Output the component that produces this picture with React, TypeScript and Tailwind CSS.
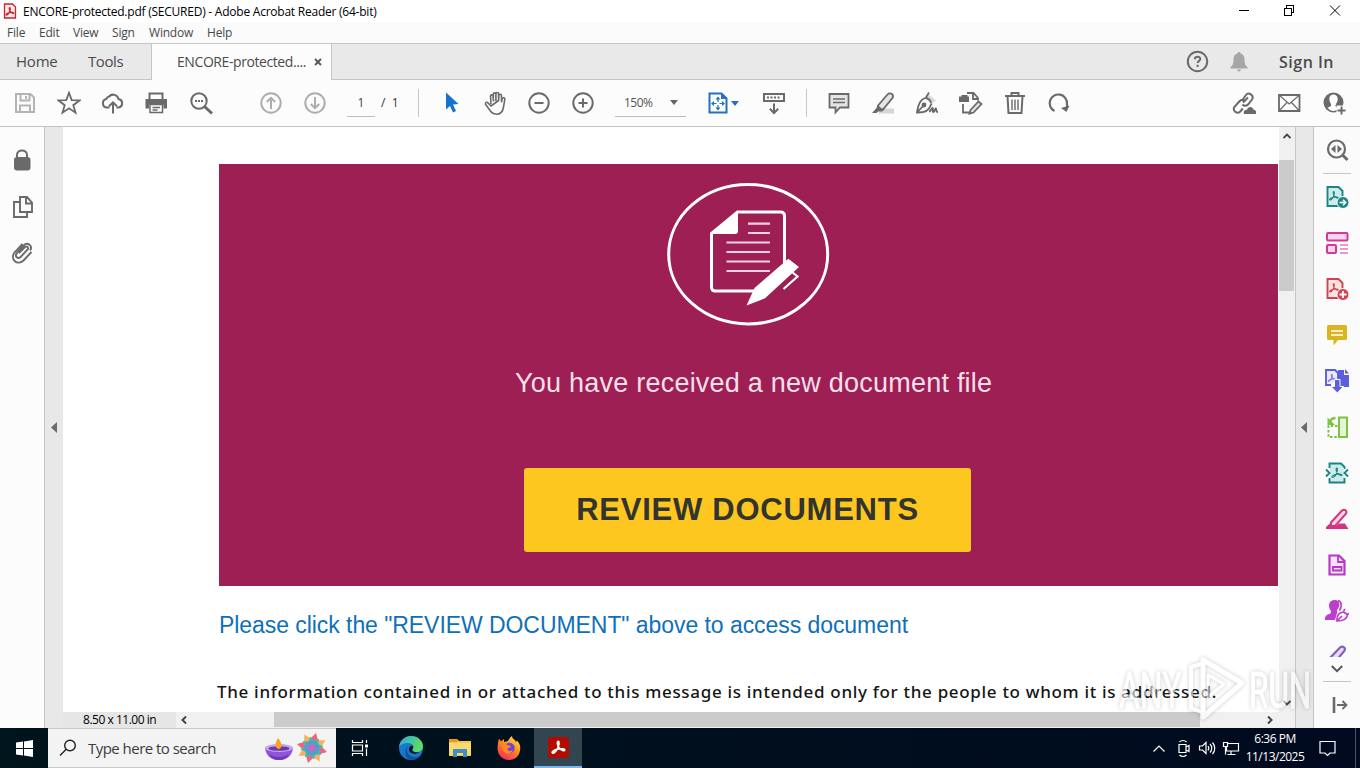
import type { ReactNode } from "react";

const G = "#6a6a6a";

type IconProps = {
  children: ReactNode;
  color?: string;
  size?: number;
  sw?: number;
};

const Icon = ({ children, color = G, size = 24, sw = 2 }: IconProps) => (
  <svg
    width={size}
    height={size}
    viewBox={`0 0 ${size} ${size}`}
    fill="none"
    stroke={color}
    strokeWidth={sw}
    className="shrink-0"
  >
    {children}
  </svg>
);

const Cell = ({ children }: { children: ReactNode }) => (
  <button className="w-11 h-full flex items-center justify-center shrink-0">{children}</button>
);

// the little three-lobed acrobat mark, drawn around 0,0
const Lobes = ({ x, y, s = 1, color, w = 1.2 }: { x: number; y: number; s?: number; color: string; w?: number }) => (
  <path
    transform={`translate(${x} ${y}) scale(${s})`}
    stroke={color}
    strokeWidth={w}
    fill="none"
    strokeLinejoin="round"
    d="M-5 4.6c-1.2-.8 1.6-2.6 4.4-3.2 2.4-.5 5.8-.6 5.8.7 0 1.5-3-.2-4.4-1.6C-.9-1.2-1.5-5-.3-5.2.9-5.2.5-1.6-.9 1.2-2.2 3.8-4.2 5.2-5 4.6z"
  />
);

const TitleBar = () => (
  <div className="h-[23px] bg-white flex items-center text-black">
    <svg width="14" height="16" viewBox="0 0 14 16" className="ml-[3px] -mt-[2px]">
      <path d="M1.5 1h8l3 3v11h-11z" fill="#fde8e8" stroke="#c9252d" strokeWidth="1.3" />
      <Lobes x={7} y={8.5} s={0.75} color="#c9252d" w={1.6} />
    </svg>
    <span className="ml-[6px] text-[12px] tracking-[-0.235px] whitespace-nowrap">
      ENCORE-protected.pdf (SECURED) - Adobe Acrobat Reader (64-bit)
    </span>
    <div className="ml-auto flex h-full">
      <svg width="136" height="23" viewBox="1224 0 136 23" fill="none" stroke="#000" shapeRendering="crispEdges">
        <path d="M1239 10.5h10M1284.5 8.5h7v7h-7zM1286.5 8v-2.5h7v7h-2.5" />
        <path d="M1330 5.5l10 10M1340 5.5l-10 10" shapeRendering="auto" />
      </svg>
    </div>
  </div>
);

const MenuBar = () => (
  <div className="h-5 bg-[#fbfbfb] flex items-center text-[12px] text-[#484848] tracking-[-0.2px]">
    <span className="ml-[7px] w-8">File</span>
    <span className="w-[34px]">Edit</span>
    <span className="w-[39px]">View</span>
    <span className="w-[37px]">Sign</span>
    <span className="w-[58px]">Window</span>
    <span>Help</span>
  </div>
);

const TabBar = () => (
  <div className="h-[37px] bg-[#e9e9e9] border-y border-[#c6c6c6] flex text-[#4b4b4b]">
    <div className="w-[151px] flex items-center text-[15px]">
      <span className="ml-4 w-[72px] tracking-[-0.2px]">Home</span>
      <span className="tracking-[-0.4px]">Tools</span>
    </div>
    <div className="w-[181px] h-9 bg-[#fcfcfc] border-x border-[#c6c6c6] flex items-center shrink-0">
      <span className="ml-[25px] w-[137px] -mt-[2px] text-[14px] tracking-[-0.42px]">ENCORE-protected....</span>
      <svg width="8" height="8" viewBox="0 0 8 8" stroke="#555" strokeWidth="1.8">
        <path d="M1 1l6 6M7 1l-6 6" />
      </svg>
    </div>
    <div className="ml-auto flex items-center">
      <Icon>
        <circle cx="11.5" cy="11.5" r="9.7" />
        <path d="M8.8 9.2c0-3.4 5.6-3.3 5.5-.2 0 1.8-2.6 2-2.7 4M11.6 14.8V17" />
      </Icon>
      <svg width="18" height="20" viewBox="0 0 18 20" fill="#a6a6a6" className="ml-5">
        <path d="M9 0c1 0 1.5.6 1.5 1.5 2.6.6 4 2.7 4 5.5 0 5 .8 6.5 3 8v1.5H.5V15c2.2-1.5 3-3 3-8 0-2.8 1.4-4.9 4-5.5C7.5.6 8 0 9 0zM7 17.5h4c0 2.5-4 2.5-4 0z" />
      </svg>
      <span className="ml-[31px] mr-[25px] w-[56px] text-[16px] font-semibold whitespace-nowrap tracking-[0.5px]">Sign In</span>
    </div>
  </div>
);

const Toolbar = () => (
  <div className="h-[47px] bg-[#fcfcfc] border-b border-[#c2c2c2] flex items-center pl-[3px] pr-1">
    <Cell>
      <Icon color="#b4b4b4">
        <path d="M3 3h14.5l3.5 3.5V21H3zM7.5 3v6.5h9V3M7 21v-6.5h10V21M13 5v3" />
      </Icon>
    </Cell>
    <Cell>
      <Icon sw={1.8}>
        <path d="M12 1.8l2.7 7.3 7.8.3-6.2 4.8 2.2 7.5-6.5-4.4-6.5 4.4 2.2-7.5-6.2-4.8 7.8-.3z" />
      </Icon>
    </Cell>
    <Cell>
      <Icon>
        <path d="M8.5 16.5H6a4.3 4.3 0 0 1-.7-8.5A4 4 0 0 1 8 5.5a5.5 5.5 0 0 1 9.5 2.6A4.3 4.3 0 0 1 18 16.5h-2.5M12 22.5v-11M8 15.3l4-4 4 4" />
      </Icon>
    </Cell>
    <Cell>
      <Icon>
        <path d="M4.500 8V2.500h13V8" />
        <path d="M.5 8H22v9.500h-3.500v-4H4v4H.5z" fill={G} stroke="none" />
        <path d="M5 13.500h12.500v8H5zM7.500 16.500H15M7.500 19h5" strokeWidth="1.5" />
      </Icon>
    </Cell>
    <Cell>
      <Icon>
        <circle cx="10" cy="10" r="7.7" />
        <path d="M15.5 15.500l7.500 7" strokeWidth="3" />
        <path d="M6 10h8" strokeWidth="2.2" strokeDasharray="2 1" />
      </Icon>
    </Cell>
    <div className="w-[26px]" />
    <Cell>
      <Icon color="#adadad">
        <circle cx="12" cy="12" r="9.7" />
        <path d="M12 18V7M7.8 11L12 6.8l4.2 4.2" />
      </Icon>
    </Cell>
    <Cell>
      <Icon color="#adadad">
        <circle cx="12" cy="12" r="9.7" />
        <path d="M12 6v11M7.8 13l4.2 4.2 4.2-4.2" />
      </Icon>
    </Cell>
    <div className="ml-[10px] w-7 h-[27px] border-b border-[#bdbdbd] text-center text-[12px] text-[#444] leading-[26px]">1</div>
    <span className="ml-[6px] w-[37px] text-[12px] text-[#333] whitespace-pre">/&nbsp; 1</span>
    <div className="w-px h-7 bg-[#c8c8c8] mr-[10px]" />
    <Cell>
      <Icon>
        <path d="M7 1.5v17l4-3.6 3 6.6 3-1.4-3-6.5 5.5-.7z" fill="#1473cf" stroke="none" />
      </Icon>
    </Cell>
    <Cell>
      <Icon sw={1.6}>
        <path
          transform="translate(1 0)"
          d="M7 13L6.500 5.200c0-1.800 2.300-1.800 2.500 0l.6 5.300M9.300 9V3.300c0-1.900 2.600-1.900 2.600 0V10M11.900 9V2.900c0-1.900 2.700-1.900 2.700 0V10M14.600 9.500l.3-5c.2-1.700 2.600-1.600 2.600.2v6l.7-3c.5-1.600 2.900-1.200 2.600.6l-1.400 8.200c-.6 4-2.700 6.700-7 6.700-3.600 0-5.300-1.500-6.900-4.500L1.500 13.300c-.6-1.600 1.300-2.700 2.500-1.400L7 15z"
          strokeLinejoin="round"
        />
      </Icon>
    </Cell>
    <Cell>
      <Icon>
        <circle cx="12" cy="12" r="9.7" />
        <path d="M7.5 12h9" />
      </Icon>
    </Cell>
    <Cell>
      <Icon>
        <circle cx="12" cy="12" r="9.7" />
        <path d="M7.5 12h9M12 7.5v9" />
      </Icon>
    </Cell>
    <div className="ml-[10px] w-[71px] h-[27px] border-b border-[#bdbdbd] flex items-center text-[12px] tracking-[-0.5px] text-[#555]">
      <span className="ml-[9px] w-[46px]">150%</span>
      <svg width="8" height="5" viewBox="0 0 8 5" fill="#666">
        <path d="M0 0h8L4 5z" />
      </svg>
    </div>
    <div className="ml-[20px] w-[56px] flex items-center">
      <Icon color="#2471bd">
        <path d="M3.5 2.5h12l5 5v14h-17z" />
        <path d="M15 2v6h6z" fill="#2471bd" stroke="none" />
        <path d="M12 7.5v10M7 12.5h10" strokeWidth="1.2" strokeDasharray="3.5 3" />
        <path d="M12 5.5l2.5 3h-5zM12 19.5l2.5-3h-5zM5 12.5l3-2.5v5zM19 12.5l-3-2.5v5z" fill="#2471bd" stroke="none" />
      </Icon>
      <svg width="8" height="5" viewBox="0 0 8 5" fill="#2471bd" className="ml-px">
        <path d="M0 0h8L4 5z" />
      </svg>
    </div>
    <Icon>
      <path d="M2 3h20v7H2z" />
      <path d="M5 6.5h14" strokeDasharray="2 1.5" strokeWidth="1.8" />
      <path d="M12 12.5v9M7.8 17.8l4.2 4.2 4.2-4.2" />
    </Icon>
    <div className="ml-[20px] mr-[10px] w-px h-7 bg-[#c8c8c8]" />
    <Cell>
      <Icon sw={1.8}>
        <path d="M2.5 3h19v13.5H13l-4.5 5v-5h-6z" fill="#e4e4e4" />
        <path d="M6 8h12M6 11.5h12" strokeWidth="1.4" />
      </Icon>
    </Cell>
    <Cell>
      <Icon sw={1.8}>
        <path d="M11 17.5h12v5H7z" fill="#d6d6d6" stroke="none" />
        <path d="M7 14.500L16.500 3.500c1.600-1.700 6.500-1.500 5.300 3.200L12 18.500H8.500z" fill="#e4e4e4" />
        <path d="M6.5 14l6 5-1.5 1.5H7L5.5 22H1l4.5-5z" fill={G} stroke="none" />
      </Icon>
    </Cell>
    <Cell>
      <Icon sw={1.8}>
        <path d="M13 3l8 6.5-4 3-6.5-6z" fill="#d9d9d9" stroke="none" />
        <path d="M14 1.5l-3 5C5.5 8.5 3.5 12 2 21.5c8 .3 12-1.5 13.5-7l1.2-2M10.5 7c3 .5 5 2.5 5.5 5M2.5 21l6-6.5" />
        <circle cx="9" cy="14" r="1.5" fill={G} />
        <path d="M14 20.5c2 0 2.500-3.500 3.500-3.500s-.5 4 .8 4 1.500-3.500 2.500-3.500-.4 3.500 2.200 3.500" />
      </Icon>
    </Cell>
    <Cell>
      <Icon sw={1.8}>
        <path d="M0 5.5h2.5V4h6v1.5H10V11H0z" fill={G} stroke="none" />
        <path d="M8 2h6.500l4.500 5v2.500M14 2.500V8h5M4 13v8.500h6.500" />
        <path d="M11.500 19l8-8.500 3 2.500-8 8.500-4 1.200z" fill="#e4e4e4" />
      </Icon>
    </Cell>
    <Cell>
      <Icon>
        <path d="M2 5h20M8.5 5V2h7v3M4.5 5l1 17h13l1-17" />
        <path d="M9 8.5V19M12 8.5V19M15 8.5V19" strokeWidth="1.4" />
      </Icon>
    </Cell>
    <Cell>
      <Icon sw={2.2}>
        <path d="M7.5 20A8.7 8.7 0 1 1 20 13v3.5" />
        <path d="M14 17l8.500-2.500-3 6.500z" fill={G} stroke="none" />
      </Icon>
    </Cell>
    <div className="ml-auto flex">
      <div className="w-[45px] flex justify-center">
        <Icon>
          <path d="M11 11.500l5-5M10 9.500l4-5.500c2.500-3.500 8.500.5 6 4.500l-4 5c-1.800 1.800-4 1.700-5.500 0M13 10c-2-1.600-4.200-1.200-5.700.5l-5 5.500c-2 4 3 7.500 6 4.500l2.500-3" />
          <path d="M12 23c-1-3 1-4.500 3-4.200 1-3.800 6-3.500 6.500 0 2.500 0 3.500 3 2.500 4.200z" fill={G} stroke="none" />
        </Icon>
      </div>
      <div className="w-[45px] flex justify-center">
        <Icon sw={1.8}>
          <path d="M2 4h20.5v16H2z" />
          <path d="M2 4l10.200 9L22.500 4M2 20l8-8.500M22.500 20l-8-8.500" strokeWidth="1.2" />
        </Icon>
      </div>
      <div className="w-[45px] flex justify-center">
        <Icon>
          <circle cx="11.5" cy="11.5" r="10" fill={G} stroke="none" />
          <path d="M11.500 3.500c-5 0-5 6-2.500 9.500.5 2-.5 2.700-3.500 3.500 3 4.500 8 4.500 11 1-3-1.500-3.500-2.500-2.500-4.500 3-4 2-9.500-2.500-9.500z" fill="#fff" stroke="none" />
          <path d="M14.5 14.5h9v9h-9z" fill="#fcfcfc" stroke="none" />
          <path d="M19.5 15.5v8M15.5 19.5h8" />
        </Icon>
      </div>
    </div>
  </div>
);

const LeftRail = () => (
  <>
    <div className="w-[45px] bg-[#fcfcfc] border-r border-[#c6c6c6] flex flex-col items-center pt-[10px] shrink-0">
      <div className="h-[46px] flex items-center">
        <Icon>
          <path d="M7 10.5V7c0-6 10-6 10 0v3.5" />
          <rect x="4" y="9" width="16.5" height="13.5" rx="3" fill={G} stroke="none" />
        </Icon>
      </div>
      <div className="h-[48px] flex items-center">
        <Icon sw={1.9}>
          <path d="M10 2h7l5 5.5V17H10zM16 2v6.5h6M10 7H4v15h13v-4.5" />
        </Icon>
      </div>
      <div className="h-[42px] flex items-center">
        <Icon sw={1.9}>
          <path d="M9 13l6-6c1.800-1.500 4 .6 2.600 2.500l-7 7.500c-3 2.500-6-.5-4-3.500l7-8c4-4 9.500.5 6.500 5M21.500 12l-8 8.500c-6 5.500-14-1-9-8l8-8.500" />
        </Icon>
      </div>
    </div>
    <div className="w-[18px] bg-[#e8e8e8] flex items-center justify-center shrink-0">
      <svg width="6" height="11" viewBox="0 0 6 11" fill="#6b6b6b">
        <path d="M6 0v11L0 5.500z" />
      </svg>
    </div>
  </>
);

const Banner = () => (
  <div className="w-[1059px] h-[422px] bg-[#9e1f54] flex flex-col items-start">
    <svg width="164" height="144" viewBox="666 182 164 144" fill="none" stroke="#fff" className="mt-[18px] ml-[447px]">
      <ellipse cx="748.2" cy="254.2" rx="79.5" ry="69.7" strokeWidth="3" />
      <path d="M784.5 270v-54q0-4-4-4h-43L711.5 233.500V287q0 4 4 4H757" strokeWidth="3" />
      <path d="M738 211v20q0 3-3 3h-24z" fill="#fff" stroke="none" />
      <path d="M748 223.700h22M748 233h22M726.500 242.500h43.500M726.500 252h43.500M726.500 261.500h43.500M726.500 271h43.500" strokeWidth="2.2" stroke="#f3d3e2" />
      <path d="M746.500 305.500l8-17.500 33.800-29.200 10.700 8.300-34 31.200z" fill="#fff" stroke="none" />
      <path d="M792 272l5.500 4.500-14 12.500" strokeWidth="2.2" />
    </svg>
    <p className="mt-[41px] ml-[296px] font-[Liberation_Sans] text-[27px] leading-8 tracking-[0.23px] text-[#f8dfea] whitespace-nowrap">
      You have received a new document file
    </p>
    <button className="mt-[69px] ml-[305px] w-[447px] h-[84px] rounded-[3px] bg-[#fdc71f] font-[Liberation_Sans] font-bold text-[31px] tracking-[0.75px] text-[#33342f] whitespace-nowrap">
      REVIEW DOCUMENTS
    </button>
  </div>
);

const Document = () => (
  <div className="w-[1216px] flex flex-col shrink-0">
    <div className="h-[585px] bg-white overflow-hidden pt-[37px] pl-[156px]">
      <Banner />
      <p className="mt-[22px] font-[Liberation_Sans] text-[23px] leading-[34px] text-[#0f70b9] whitespace-nowrap tracking-[-0.06px]">
        Please click the "REVIEW DOCUMENT" above to access document
      </p>
      <p className="mt-[35px] -ml-[2px] font-[Noto_Sans] font-medium text-[17px] leading-[30px] tracking-[0.68px] text-[#151515] whitespace-nowrap">
        The information contained in or attached to this message is intended only for the people to whom it is addressed.
      </p>
    </div>
    <div className="h-4 flex bg-[#f0f0f0]">
      <div className="w-[113px] bg-[#e6e6e6] text-[12px] leading-4 tracking-[-0.48px] text-black pl-[20px] whitespace-nowrap">8.50 x 11.00 in</div>
      <div className="w-[98px] flex items-center pl-[5px]">
        <svg width="6" height="8" viewBox="0 0 6 8" fill="none" stroke="#444" strokeWidth="2">
          <path d="M5 .5L1.5 4 5 7.5" />
        </svg>
      </div>
      <div className="w-[926px] h-[15px] bg-[#cbcbcb]" />
      <div className="flex-1 flex items-center justify-end pr-[6px]">
        <svg width="6" height="8" viewBox="0 0 6 8" fill="none" stroke="#444" strokeWidth="2">
          <path d="M1 .5L4.5 4 1 7.5" />
        </svg>
      </div>
    </div>
  </div>
);

const VerticalScroll = () => (
  <>
    <div className="w-4 pr-px bg-[#f0f0f0] flex flex-col items-center shrink-0">
      <div className="h-[33px] pt-[6px]">
        <svg width="8" height="6" viewBox="0 0 8 6" fill="none" stroke="#444" strokeWidth="1.8">
          <path d="M.5 5L4 1.5 7.5 5" />
        </svg>
      </div>
      <div className="w-[15px] h-[131px] bg-[#cbcbcb]" />
      <svg width="8" height="6" viewBox="0 0 8 6" fill="none" stroke="#444" strokeWidth="1.8" className="mt-auto mb-[22px]">
        <path d="M.5 1L4 4.5 7.5 1" />
      </svg>
    </div>
    <div className="w-[19px] pr-[2px] bg-[#e8e8e8] border-x border-[#c6c6c6] flex items-center justify-center shrink-0">
      <svg width="6" height="11" viewBox="0 0 6 11" fill="#6b6b6b">
        <path d="M6 0v11L0 5.500z" />
      </svg>
    </div>
  </>
);

const Tool = ({ children, color, sw }: { children: ReactNode; color: string; sw?: number }) => (
  <div className="h-[46px] flex items-center shrink-0">
    <Icon color={color} sw={sw}>{children}</Icon>
  </div>
);

const ToolsPane = () => (
  <div className="flex-1 bg-[#fbfbfb] flex flex-col items-center">
    <Tool color={G} sw={2.2}>
      <circle cx="11.5" cy="11" r="8.5" />
      <path d="M17.500 17l5 5" strokeWidth="3" />
      <path d="M10.500 7v8L6 11zM12.500 7v8l4.500-4z" fill={G} stroke="none" />
    </Tool>
    <div className="w-7 h-px bg-[#c6c6c6]" />
    <Tool color="#1b8585" sw={1.9}>
      <path d="M2.500 2h11l4 4v15h-15z" fill="#cdebea" />
      <Lobes x={9} y={11} s={0.85} color="#1b8585" />
      <circle cx="18" cy="17.5" r="6" fill="#1b8585" stroke="#fbfbfb" strokeWidth="1" />
      <path d="M14.500 17.500h6M18 14.800l2.700 2.700-2.700 2.700" stroke="#fff" strokeWidth="1.6" />
    </Tool>
    <Tool color="#d13a95">
      <rect x="2" y="2" width="20.5" height="7.5" rx="1" fill="#fbd3ec" />
      <rect x="2" y="14" width="9" height="8" rx="1" fill="#fbd3ec" />
      <path d="M15 14h8M15 18h8M15 22h8" strokeWidth="1.2" />
    </Tool>
    <Tool color="#cf4450" sw={1.9}>
      <path d="M2.500 2h11l4 4v15h-15z" fill="#fde3e0" />
      <Lobes x={9} y={11} s={0.85} color="#cf4450" />
      <circle cx="18" cy="17.5" r="6" fill="#cf4450" stroke="#fbfbfb" strokeWidth="1" />
      <path d="M14.500 17.500h7M18 14v7" stroke="#fff" strokeWidth="1.8" />
    </Tool>
    <Tool color="#d9b51f">
      <path d="M3.500 2h17q1.500 0 1.500 1.500v12q0 1.500-1.500 1.500H13l-4.500 5.500V17h-5Q2 17 2 15.500v-12Q2 2 3.500 2z" fill="#d9b51f" stroke="none" />
      <path d="M6 8h12M6 12h12" stroke="#fff" strokeWidth="1.6" />
    </Tool>
    <Tool color="#5b5fdc" sw={1.9}>
      <path d="M13 1h6v5h5v12H13z" fill="#5b5fdc" stroke="none" />
      <path d="M20 0v4.500h4z" fill="#5b5fdc" stroke="none" />
      <path d="M6 16H1V1h9l3 3v6" fill="#e9eaff" />
      <Lobes x={7} y={9} s={0.75} color="#5b5fdc" />
      <path d="M9.500 10.500h5.500v7h3.500l-6.200 6.500-6.300-6.500h3.500z" fill="#5b5fdc" stroke="#fbfbfb" strokeWidth="1" />
    </Tool>
    <Tool color="#7fc243">
      <path d="M14 2.500h8V22h-8z" fill="#e3f5d4" />
      <path d="M12.500 11H3.500v11h9" strokeDasharray="2.5 1.8" />
      <path d="M10.500 3C8 3 6 4 5 6.500" strokeWidth="2.4" />
      <path d="M2.500 2.500v7.500H10z" fill="#7fc243" stroke="none" />
    </Tool>
    <Tool color="#1b8585" sw={1.9}>
      <path d="M4.500 7V2.500h11.500l3.500 3.500v2M4.500 17v4.500h15V17" fill="#cdebea" />
      <path d="M5 7h14v10H5z" fill="#cdebea" stroke="none" />
      <Lobes x={12} y={12} s={0.95} color="#1b8585" />
      <path d="M1 8.500l3.500 3.500L1 15.500M23 8.500l-3.500 3.500 3.500 3.500" />
    </Tool>
    <Tool color="#d2347f" sw={1.9}>
      <path d="M14 16.500h6l3.500 5.500H1v-2l4-3.500 2 3h3.500z" fill="#d2347f" stroke="none" />
      <path d="M6 15.500L17 3.500c2.500-2 5.500.5 4 3.200L10 19H6z" fill="#fbd3e6" />
    </Tool>
    <Tool color="#b63bc4" sw={2.2}>
      <path d="M4.500 2.500h9.500l5.500 5.500v13.500h-15z" fill="#f9e0fc" />
      <path d="M13 2.500V9h6.500M8 14h8.500v3.500H8z" strokeWidth="1.8" />
    </Tool>
    <Tool color="#bb3fca" sw={1.7}>
      <path d="M9 1c6-1 7 6 3 10v3l-2 7H0c0-4 1-5 5.500-6.500L6 12C3 8 3 2 9 1z" fill="#bb3fca" stroke="none" />
      <path d="M13 1.500c4 .5 4 6.500 1.500 10" />
      <path d="M12 22c-.5-6 2-8.500 6.500-9l4 2.500c-.5 4.500-3.500 6.500-10.500 6.500zM12.500 21.500l4.500-4.500M18.500 12l1.500-2M22 16l2-1.500" fill="#fbfbfb" />
    </Tool>
    <div className="h-[23px] overflow-hidden shrink-0">
      <Tool color="#8260bf" sw={2.2}>
        <path d="M4 14L15 2.500c2.500-2 6 0 4.500 3.200L10 17H4z" fill="#ecd9fb" />
      </Tool>
    </div>
    <div className="h-6 flex items-center">
      <svg width="12" height="8" viewBox="0 0 12 8" fill="none" stroke="#555" strokeWidth="2">
        <path d="M.8 1L6 6.200 11.200 1" />
      </svg>
    </div>
    <div className="w-7 h-px bg-[#c6c6c6]" />
    <div className="h-[46px] flex items-center">
      <Icon>
        <path d="M9 4v16" strokeWidth="2.6" />
        <path d="M12 12h9M17.500 8l4 4-4 4" strokeWidth="1.8" />
      </Icon>
    </div>
  </div>
);

const Taskbar = () => (
  <div className="h-10 bg-linear-to-r from-[#00141c] to-[#010a20] flex items-center text-white">
    <div className="w-12 flex justify-center">
      <svg width="17" height="17" viewBox="0 0 17 17" fill="#fff">
        <path d="M0 2.500L7 1.500V8H0zM8 1.400L17 0v8H8zM0 9h7v6.500l-7-1zM8 9h9v8l-9-1.400z" />
      </svg>
    </div>
    <div className="w-72 h-10 bg-[#f3f3f3] border-y border-[#c9c9c9] flex items-center">
      <svg width="18" height="18" viewBox="0 0 18 18" fill="none" stroke="#222" strokeWidth="1.4" className="ml-[11px]">
        <circle cx="11" cy="6.5" r="5.3" />
        <path d="M7.200 10.300L1 16.500" />
      </svg>
      <span className="ml-[11px] w-[176px] text-[15px] tracking-[-0.53px] text-[#3c3c3c]">Type here to search</span>
      <svg width="64" height="32" viewBox="264 732 64 32">
        <path d="M265 748c1 8 6 12 14 12s13-4 14-12z" fill="#8f55d6" />
        <path d="M269 754c5 4 15 4 20 0-2 4-5 6-10 6s-8-2-10-6z" fill="#6e39b8" />
        <ellipse cx="279" cy="748" rx="14" ry="4" fill="#c9a2f2" />
        <ellipse cx="279" cy="748.5" rx="10.5" ry="2.3" fill="#6b3aa8" />
        <path d="M278 738c4 5 5 9 1 11-5-1-4-6-1-11z" fill="#f9a51c" />
        <g transform="translate(312 748)">
          {[15, 60, 105, 150, 195, 240, 285, 330].map((a, i) => (
            <path key={a} transform={`rotate(${a})`} d="M-5-7L0-15.500 5-7z" fill={i % 2 ? "#f4b45c" : "#ee6478"} />
          ))}
          {[37, 82, 127, 172, 217, 262, 307, 352].map((a) => (
            <path key={a} transform={`rotate(${a})`} d="M-4-5L0-11.500 4-5z" fill="#4fb3b8" />
          ))}
          <circle r="7.5" fill="#4aa5c4" />
          <circle r="5" fill="#8a7fd6" />
          <circle r="2.5" fill="#d565b0" />
        </g>
      </svg>
    </div>
    <div className="w-12 flex justify-center">
      <svg width="18" height="18" viewBox="0 0 18 18" fill="none" stroke="#fff" strokeWidth="1.2">
        <path d="M1.500 1v2.500h10V1M1.500 17v-2.500h10V17M1.500 6h10v6h-10zM15.500 1v3M15.500 9.500V17" />
        <path d="M14 5.500h3v3h-3z" fill="#fff" stroke="none" />
      </svg>
    </div>
    <div className="w-[54px] flex justify-center">
      <svg width="24" height="24" viewBox="0 0 24 24">
        <defs>
          <linearGradient id="edgeTop" x1="0" x2="1" y1="0" y2=".4">
            <stop offset="0" stopColor="#2aa7e0" />
            <stop offset="1" stopColor="#5fdc62" />
          </linearGradient>
        </defs>
        <circle cx="12" cy="12" r="12" fill="#1778cd" />
        <path d="M0 11C1 4 6 0 12 0c7 0 12 5 12 10 0 4-3 6-6 6-3.500 0-5-1.500-4-3 1.500-3-1-6-5-6-4 0-8 2-9 4z" fill="url(#edgeTop)" />
        <path d="M9 10c-3 5 1 11 7 11 2 0 4-.6 6-1.700C19 23 15 24 12 24 5 23 5 13 9 10z" fill="#14539c" />
        <path d="M13.500 9.500c2 2-1.500 4 0 5.500s4 1.700 7 .8c-3 3-9 2.700-10.300-1-.8-2.500 1-5.300 3.300-5.300z" fill="#06141f" />
      </svg>
    </div>
    <div className="w-[44px] flex justify-center">
      <svg width="22" height="20" viewBox="0 0 22 20">
        <path d="M0 1h8l2 2h12v15H0z" fill="#f7c846" />
        <path d="M0 1h8l1 1.500L8 4H0z" fill="#e59a1c" />
        <path d="M0 5h22v12H0z" fill="#fbd96f" />
        <path d="M4 19v-8h14v8h-4v-4H8v4z" fill="#3d8fcb" />
      </svg>
    </div>
    <div className="w-[52px] flex justify-center">
      <svg width="24" height="24" viewBox="0 0 24 24" className="ml-[2px]">
        <defs>
          <linearGradient id="fox" x1=".8" x2=".2" y1="0" y2="1">
            <stop offset="0" stopColor="#ffe23d" />
            <stop offset=".45" stopColor="#ff8a1e" />
            <stop offset="1" stopColor="#f5245e" />
          </linearGradient>
        </defs>
        <path d="M2 3c1 .6 1.500 1.500 2 2.500L7 3v3l4-1c1-2 2-4 4-5 0 3 3 3 4 6l1-1.500c3 3 3.500 6 3.200 9C22.500 20 18 24 12 24S.8 19.500.5 13C.5 9 1 6 2 3z" fill="url(#fox)" />
        <circle cx="12.5" cy="12" r="5.2" fill="#6f3fe0" />
        <path d="M5 9c3-2 5-1 6 .5 2 0 3 .5 3 1.500l-3.500 1.500C10 15 14 16 16 13.500 15 19 7 18.500 6 14z" fill="#ff8a22" />
      </svg>
    </div>
    <div className="w-12 h-10 bg-[#33454f] border-b-2 border-[#76b9ed] flex items-center justify-center">
      <svg width="21" height="21" viewBox="0 0 21 21">
        <rect width="21" height="21" rx="3" fill="#b30b00" />
        <Lobes x={10.5} y={10.5} s={1.2} color="#fff" w={1.4} />
      </svg>
    </div>
    <div className="ml-auto flex items-center h-full">
      <svg width="88" height="20" viewBox="1152 738 88 20" fill="none" stroke="#fff" strokeWidth="1.2">
        <path d="M1153.500 751.500l5.500-5.500 5.500 5.500" />
        <path d="M1179 744.500h7v8h-7zM1186 747l3-1.500v6l-3-1.500M1179.500 742c2-1.800 5-1.800 7 0M1179.500 755c2 1.800 5 1.800 7 0" />
        <path d="M1199.500 746h3l3.500-3.500v11l-3.500-3.500h-3zM1208 746c1 1.300 1 3 0 4.500M1210 744c2.300 2.300 2.300 6 0 8.500M1212.500 742.500c3 3.300 3 8 0 11.500" />
        <path d="M1228 743.500h10.500v7.500h-12v-4M1231 751v3M1227.500 754.500h8M1223.500 742.500h4v4h-4zM1225.500 746.500v8" />
      </svg>
      <div className="w-[70px] text-center text-[12px] leading-[18px] tracking-[-0.5px] whitespace-nowrap">
        <div>6:36 PM</div>
        <div>11/13/2025</div>
      </div>
      <svg width="17" height="17" viewBox="0 0 17 17" fill="none" stroke="#fff" strokeWidth="1.2" className="ml-[9px]">
        <path d="M1 1.500h15v11.500h-5l-2.500 2.500L6 13H1z" />
      </svg>
      <div className="ml-[19px] w-px h-10 bg-[#4b5563]" />
      <div className="w-1" />
    </div>
  </div>
);

const Watermark = () => (
  <svg
    width="210"
    height="80"
    viewBox="1110 650 210 80"
    className="absolute left-[1110px] top-[650px] pointer-events-none drop-shadow-[0_0_2px_rgba(0,0,0,0.35)]"
    opacity="0.6"
  >
    <g fill="#fff" stroke="#fff" strokeWidth="1" fontFamily="Roboto, sans-serif" fontSize="50">
      <text transform="translate(1119 708) scale(.64 1)">ANY</text>
      <text transform="translate(1249 708) scale(.63 1)">RUN</text>
    </g>
    <g fill="none" stroke="#fff" strokeLinejoin="round">
      <path d="M1201 664l-10 3v41l10 4" strokeWidth="4" />
      <path d="M1203 660l39 23-39 34z" strokeWidth="5" />
      <path d="M1208 675l16 9-16 13z" strokeWidth="3" />
    </g>
  </svg>
);

const App = () => {
  return (
    <div className="relative w-[1360px] h-[768px] overflow-hidden flex flex-col font-[Open_Sans,sans-serif]">
      <TitleBar />
      <MenuBar />
      <TabBar />
      <Toolbar />
      <main className="h-[601px] flex">
        <LeftRail />
        <Document />
        <VerticalScroll />
        <ToolsPane />
      </main>
      <Taskbar />
      <Watermark />
    </div>
  );
};

export default App;
